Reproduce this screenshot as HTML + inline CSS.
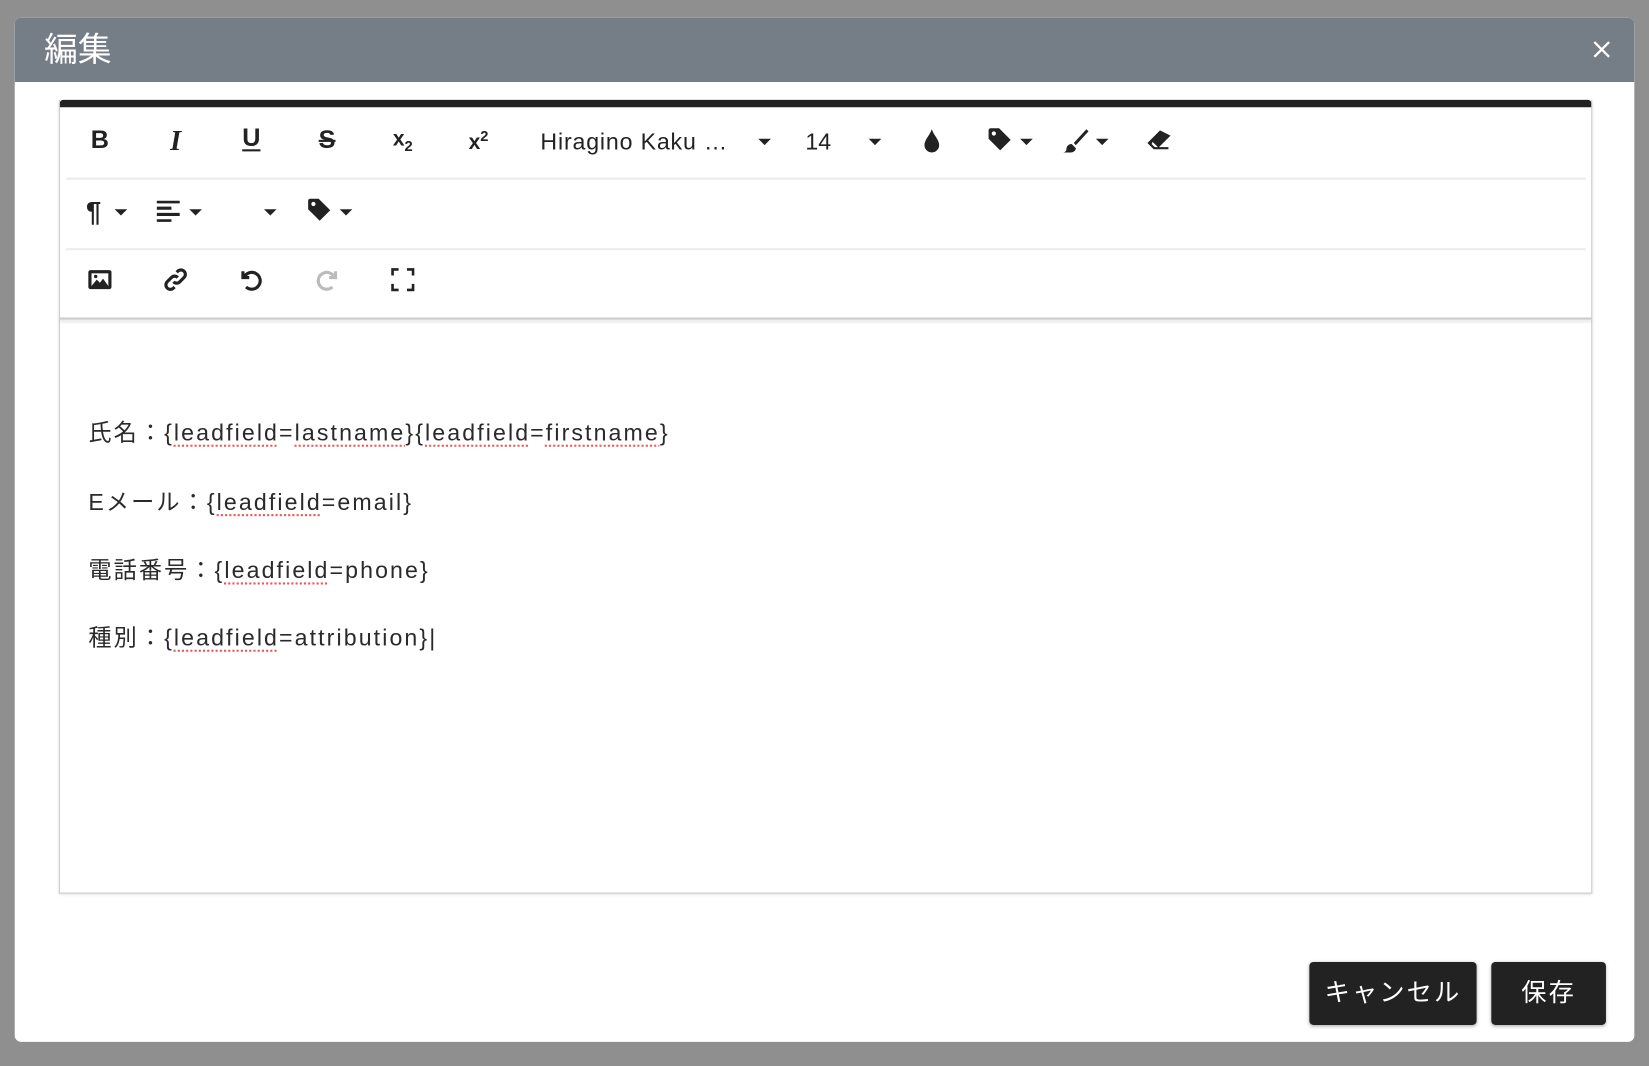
<!DOCTYPE html>
<html><head><meta charset="utf-8"><style>
html,body{margin:0;padding:0;width:1649px;height:1066px;overflow:hidden;background:#8f8f8f;}
#w{position:absolute;left:0;top:0;width:1568px;height:1014px;transform:scale(1.0517,1.0513);transform-origin:0 0;font-family:"Liberation Sans","Noto Sans CJK JP",sans-serif;}
.modal{position:absolute;left:14px;top:17px;width:1540px;height:974px;background:#fff;border-radius:6px;overflow:hidden;}
.hd{position:absolute;left:0;top:0;width:100%;height:61px;background:#757d87;}
.hd .t{position:absolute;left:28px;top:9px;font-size:32px;color:#fff;line-height:42px;}
.hd .x{position:absolute;left:1500px;top:21px;}
.ed{position:absolute;left:42px;top:78px;width:1456px;height:754px;border:1px solid #ccc;border-top:none;box-shadow:0 1px 3px rgba(0,0,0,.15);}
.bar{position:absolute;left:0;top:0;width:100%;height:7px;background:#222;border-radius:3px 3px 0 0;}
.sep{position:absolute;left:6px;width:1445px;height:2px;background:#ececec;}
.tb{position:absolute;left:0;top:207px;width:100%;height:2px;background:#ccc;box-shadow:0 2px 3px rgba(0,0,0,.15);}
.ic{position:absolute;transform:translate(-50%,-50%);color:#222;font-weight:bold;font-size:24px;line-height:1;}
.car{position:absolute;width:0;height:0;border-left:6px solid transparent;border-right:6px solid transparent;border-top:6px solid #222;transform:translate(-50%,-50%);}
.txt{position:absolute;left:27px;font-size:22px;color:#2a2a2a;line-height:30px;white-space:nowrap;letter-spacing:2px;}
.sp{text-decoration:underline dotted #e55;text-decoration-thickness:2px;text-underline-offset:4px;}
.btn{position:absolute;top:898px;height:60px;background:#222;color:#fff;border-radius:4px;font-size:24px;line-height:60px;text-align:center;letter-spacing:2px;box-shadow:0 1px 3px rgba(0,0,0,.3);}
</style></head><body><div id="w">
<div class="modal">
<div class="hd"><div class="t">編集</div>
<svg class="x" width="18" height="18" viewBox="0 0 18 18"><path d="M2 2L16 16M16 2L2 16" stroke="#fff" stroke-width="2.2"/></svg></div>
<div class="ed">
<div class="bar"></div>
<div class="sep" style="top:74px"></div>
<div class="sep" style="top:141px"></div>
<div class="tb"></div>
<div class="ic" style="left:38px;top:39px;">B</div>
<div class="ic" style="left:110px;top:39px;font-style:italic;font-family:'Liberation Serif',serif;font-size:27px;">I</div>
<div class="ic" style="left:182px;top:37px;text-decoration:underline;text-underline-offset:3px;">U</div>
<div class="ic" style="left:254px;top:39px;text-decoration:line-through;">S</div>
<div class="ic" style="left:326px;top:39px;font-size:20px;">x<sub style="font-size:14px">2</sub></div>
<div class="ic" style="left:398px;top:39px;font-size:20px;">x<sup style="font-size:14px">2</sup></div>
<div class="ic" style="left:546px;top:40px;font-weight:normal;font-size:22px;letter-spacing:0.8px;">Hiragino Kaku …</div>
<div class="car" style="left:670px;top:40px"></div>
<div class="ic" style="left:721px;top:40px;font-weight:normal;font-size:22px;">14</div>
<div class="car" style="left:775px;top:40px"></div>
<svg class="ic" style="left:829px;top:39px" width="18" height="24" viewBox="0 0 18 24"><path d="M9 1C7 7 2 11 2 16a7 7 0 0014 0C16 11 11 7 9 1z" fill="#222"/></svg>
<svg class="ic" style="left:894px;top:38px" width="24" height="24" viewBox="0 0 24 24"><path d="M1 3v8l11 11 10-10L11 1H3a2 2 0 00-2 2z" fill="#222"/><circle cx="6" cy="6" r="2" fill="#fff"/></svg>
<div class="car" style="left:919px;top:40px"></div>
<svg class="ic" style="left:966px;top:39px" width="24" height="24" viewBox="0 0 24 24"><path d="M22 1L10 14l2 2L24 3z M8 15c-3 0-5 2-5 5 0 2-2 3-3 3h7c3 0 5-2 5-4z" fill="#222"/></svg>
<div class="car" style="left:991px;top:40px"></div>
<svg class="ic" style="left:1045px;top:39px" width="26" height="22" viewBox="0 0 26 22"><path d="M14 1L2 13l6 6h14v-2h-9l11-11z" fill="#222"/><path d="M7 12l5 5H9l-3-3z" fill="#fff"/></svg>
<div class="ic" style="left:32px;top:106px;font-size:26px;">¶</div>
<div class="car" style="left:58px;top:107px"></div>
<svg class="ic" style="left:103px;top:106px" width="22" height="20" viewBox="0 0 22 20"><path d="M0 1h22M0 7h14M0 13h22M0 19h14" stroke="#222" stroke-width="3"/></svg>
<div class="car" style="left:129px;top:107px"></div>
<div class="car" style="left:200px;top:107px"></div>
<svg class="ic" style="left:247px;top:105px" width="24" height="24" viewBox="0 0 24 24"><path d="M1 3v8l11 11 10-10L11 1H3a2 2 0 00-2 2z" fill="#222"/><circle cx="6" cy="6" r="2" fill="#fff"/></svg>
<div class="car" style="left:272px;top:107px"></div>
<svg class="ic" style="left:38px;top:171px" width="24" height="20" viewBox="0 0 24 20"><rect x="1" y="1" width="22" height="18" rx="2" fill="#222"/><rect x="4" y="4" width="16" height="12" fill="#fff"/><path d="M4 16l5-6 3 3 3-4 5 7z" fill="#222"/><circle cx="8" cy="7" r="1.6" fill="#222"/></svg>
<svg class="ic" style="left:110px;top:171px" width="24" height="24" viewBox="0 0 24 24" fill="none" stroke="#222" stroke-width="3"><path d="M10 14a4 4 0 006 0l4-4a4 4 0 00-6-6l-1 1"/><path d="M14 10a4 4 0 00-6 0l-4 4a4 4 0 006 6l1-1"/></svg>
<svg class="ic" style="left:182px;top:171px" width="24" height="24" viewBox="0 0 24 24" fill="none" stroke="#222" stroke-width="3"><path d="M4 4v6h6"/><path d="M5 10a8 8 0 112 9"/></svg>
<svg class="ic" style="left:254px;top:171px" width="24" height="24" viewBox="0 0 24 24" fill="none" stroke="#bbb" stroke-width="3"><path d="M20 4v6h-6"/><path d="M19 10a8 8 0 10-2 9"/></svg>
<svg class="ic" style="left:326px;top:171px" width="22" height="22" viewBox="0 0 22 22" fill="none" stroke="#222" stroke-width="3"><path d="M1 7V1h6M15 1h6v6M21 15v6h-6M7 21H1v-6"/></svg>
<div class="txt" style="top:302px">氏名：{<span class="sp">leadfield</span>=<span class="sp">lastname</span>}{<span class="sp">leadfield</span>=<span class="sp">firstname</span>}</div>
<div class="txt" style="top:368px">Eメール：{<span class="sp">leadfield</span>=email}</div>
<div class="txt" style="top:433px">電話番号：{<span class="sp">leadfield</span>=phone}</div>
<div class="txt" style="top:497px">種別：{<span class="sp">leadfield</span>=attribution}|</div>
</div>
<div class="btn" style="left:1231px;width:159px;">キャンセル</div>
<div class="btn" style="left:1404px;width:109px;">保存</div>
</div>
</div></body></html>
